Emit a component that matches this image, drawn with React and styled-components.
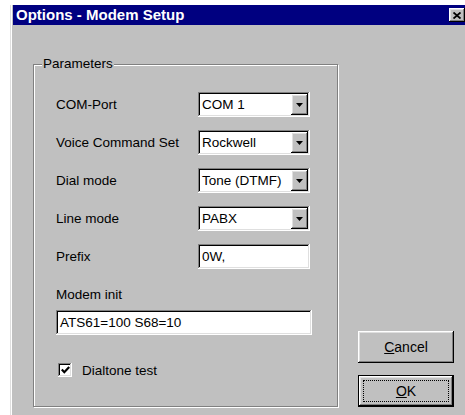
import React from 'react';
import styled, { createGlobalStyle, css } from 'styled-components';

const GlobalStyle = createGlobalStyle`
  html, body {
    margin: 0;
    background: #fff;
    overflow: hidden;
    font-family: "Liberation Sans", Arial, sans-serif;
  }
`;

// classic 3d bevels
const raised = css`
  background: #c0c0c0;
  box-shadow: inset -1px -1px #000, inset 1px 1px #fff, inset -2px -2px #808080,
    inset 2px 2px #dfdfdf;
`;

const sunken = css`
  background: #fff;
  box-shadow: inset -1px -1px #fff, inset 1px 1px #808080, inset -2px -2px #dfdfdf,
    inset 2px 2px #000;
`;

const Window = styled.div`
  margin: 5px 0 0 10px;
  width: 462px;
  height: 420px;
  padding-left: 3px;
  background: #c0c0c0;
  box-shadow: inset 1px 0 #dfdfdf, inset 2px 0 #fff;
  display: flex;
  flex-direction: column;
`;

const TitleBar = styled.div`
  height: 20px;
  background: #000080;
  color: #fff;
  display: flex;
  align-items: center;
  justify-content: space-between;
  padding: 0 10px 0 3px;
  font-weight: bold;
  font-size: 15px;
  line-height: 20px;
`;

const CloseButton = styled.div`
  ${raised};
  width: 16px;
  height: 14px;
  display: flex;
  align-items: center;
  justify-content: center;
`;

const Body = styled.div`
  display: flex;
  align-items: flex-end;
  gap: 20px;
  padding: 39px 0 0 20px;
`;

const GroupBox = styled.div`
  position: relative;
  width: 305px;
  box-sizing: border-box;
  border: 1px solid #808080;
  box-shadow: 1px 1px 0 #fff, inset 1px 1px 0 #fff;
  padding: 27px 0 28px 22px;
`;

const GroupTitle = styled.span`
  position: absolute;
  top: -9px;
  left: 8px;
  padding: 0 1px;
  background: #c0c0c0;
  font-size: 13.5px;
  line-height: 16px;
`;

const Row = styled.div`
  display: grid;
  grid-template-columns: 142px 112px;
  align-items: center;
  height: 25px;
  margin-bottom: 13px;
`;

const Label = styled.div`
  font-size: 13.5px;
  line-height: 16px;
  margin-top: ${(p) => p.$top || 0}px;
`;

const Combo = styled.div`
  ${sunken};
  display: flex;
  height: 25px;
  box-sizing: border-box;
  padding: 2px;
`;

const Value = styled.div`
  flex: 1;
  padding-left: 2px;
  font-size: 13.5px;
  line-height: 21px;
  white-space: nowrap;
  overflow: hidden;
`;

const DropButton = styled.div`
  ${raised};
  width: 17px;
  display: flex;
  align-items: center;
  justify-content: center;
`;

const Edit = styled.div`
  ${sunken};
  width: ${(p) => p.$width}px;
  height: 25px;
  box-sizing: border-box;
  padding: 2px;
  margin-top: ${(p) => p.$top || 0}px;
`;

const CheckRow = styled.div`
  display: flex;
  align-items: center;
  gap: 10px;
  height: 16px;
  margin-top: 27px;
  font-size: 13.5px;
`;

const CheckBox = styled.div`
  ${sunken};
  width: 14px;
  height: 14px;
  margin-left: 2px;
  display: flex;
  align-items: center;
  justify-content: center;
`;

const ButtonColumn = styled.div`
  display: flex;
  flex-direction: column;
  gap: 12px;
`;

const Button = styled.div`
  ${raised};
  position: relative;
  width: 96px;
  height: 32px;
  display: flex;
  align-items: center;
  justify-content: center;
  font-size: 14px;
  box-sizing: border-box;
  ${(p) =>
    p.$default &&
    css`
      border: 1px solid #000;
      &::after {
        content: '';
        position: absolute;
        inset: 4px;
        border: 1px dotted #000;
      }
    `}
`;

const Arrow = () => (
  <svg width="7" height="4" viewBox="0 0 7 4">
    <path d="M0 0h7L3.5 4z" fill="#000" />
  </svg>
);

const ComboRow = ({ label, value }) => (
  <Row>
    <Label>{label}</Label>
    <Combo>
      <Value>{value}</Value>
      <DropButton>
        <Arrow />
      </DropButton>
    </Combo>
  </Row>
);

export default function App() {
  return (
    <>
      <GlobalStyle />
      <Window>
        <TitleBar>
          <span>Options - Modem Setup</span>
          <CloseButton>
            <svg width="8" height="7" viewBox="0 0 8 7">
              <path d="M0.5 0.5L7.5 6.5M7.5 0.5L0.5 6.5" stroke="#000" strokeWidth="1.8" />
            </svg>
          </CloseButton>
        </TitleBar>
        <Body>
          <GroupBox>
            <GroupTitle>Parameters</GroupTitle>
            <ComboRow label="COM-Port" value="COM 1" />
            <ComboRow label="Voice Command Set" value="Rockwell" />
            <ComboRow label="Dial mode" value="Tone (DTMF)" />
            <ComboRow label="Line mode" value="PABX" />
            <Row>
              <Label>Prefix</Label>
              <Edit $width={112}>
                <Value>0W,</Value>
              </Edit>
            </Row>
            <Label $top={18}>Modem init</Label>
            <Edit $width={256} $top={7}>
              <Value>ATS61=100 S68=10</Value>
            </Edit>
            <CheckRow>
              <CheckBox>
                <svg width="9" height="8" viewBox="0 0 9 8">
                  <path d="M0.8 3.6L3.3 6.2L8.2 1" fill="none" stroke="#000" strokeWidth="2.2" />
                </svg>
              </CheckBox>
              <span>Dialtone test</span>
            </CheckRow>
          </GroupBox>
          <ButtonColumn>
            <Button>
              <span>
                <u>C</u>ancel
              </span>
            </Button>
            <Button $default>
              <span>
                <u>O</u>K
              </span>
            </Button>
          </ButtonColumn>
        </Body>
      </Window>
    </>
  );
}
